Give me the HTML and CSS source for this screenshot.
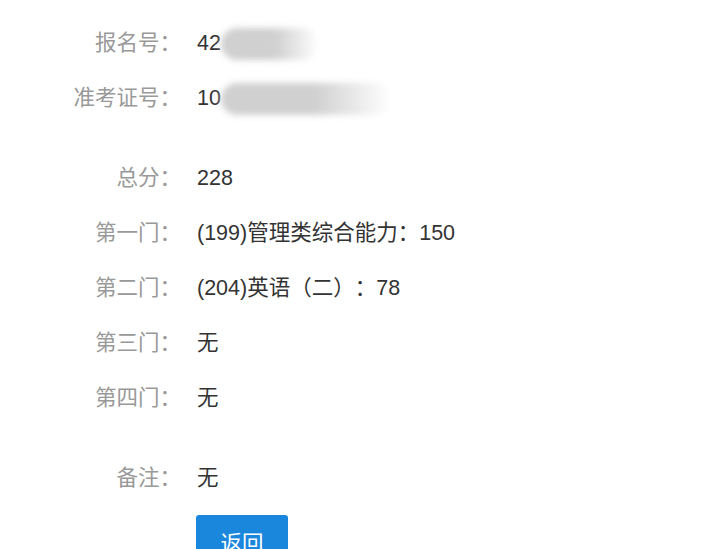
FILE: index.html
```html
<!DOCTYPE html>
<html lang="zh-CN">
<head>
    <meta charset="UTF-8">
    <meta name="viewport" content="width=device-width, initial-scale=1.0">
    <title>成绩查询</title>
    <link rel="stylesheet" href="styles.css">
</head>
<body>
    <section class="score">
        <div class="row">
            <span class="label">报名号：</span>
            <span class="value">42<span class="mask mask-short"></span></span>
        </div>
        <div class="row">
            <span class="label">准考证号：</span>
            <span class="value">10<span class="mask mask-long"></span></span>
        </div>

        <div class="row group">
            <span class="label">总分：</span>
            <span class="value">228</span>
        </div>
        <div class="row">
            <span class="label">第一门：</span>
            <span class="value">(199)管理类综合能力：150</span>
        </div>
        <div class="row">
            <span class="label">第二门：</span>
            <span class="value">(204)英语（二）：78</span>
        </div>
        <div class="row">
            <span class="label">第三门：</span>
            <span class="value">无</span>
        </div>
        <div class="row">
            <span class="label">第四门：</span>
            <span class="value">无</span>
        </div>

        <div class="row group">
            <span class="label">备注：</span>
            <span class="value">无</span>
        </div>

        <div class="actions">
            <button class="btn" type="button">返回</button>
        </div>
    </section>
</body>
</html>
```

FILE: styles.css
```css
body {
    margin: 0;
    padding: 0;
    background-color: #fff;
    font-family: 'Liberation Sans', 'Noto Sans CJK SC', sans-serif;
    font-size: 21.5px;
    text-spacing-trim: space-all;
    overflow: hidden;
}

.score {
    padding-top: 16px;
}

.row {
    display: flex;
    height: 55px;
    line-height: 55px;
}

.row.group {
    margin-top: 25px;
}

.label {
    width: 181px;
    text-align: right;
    color: #999;
}

.value {
    margin-left: 16px;
    color: #333;
    display: flex;
    align-items: center;
}

.mask {
    display: inline-block;
    height: 32px;
    border-radius: 16px;
    background: linear-gradient(to right, #d0d0d0 55%, rgba(208, 208, 208, 0));
    filter: blur(3px);
}

.mask-short {
    width: 98px;
}

.mask-long {
    width: 170px;
}

.actions {
    padding-left: 196px;
    margin-top: 9px;
}

.btn {
    font-family: 'Liberation Sans', 'Noto Sans CJK SC', sans-serif;
    font-size: 21.5px;
    color: #fff;
    background-color: #1a87dd;
    border: none;
    border-radius: 3px;
    width: 92px;
    height: 52px;
    padding: 0;
    cursor: pointer;
}
```
